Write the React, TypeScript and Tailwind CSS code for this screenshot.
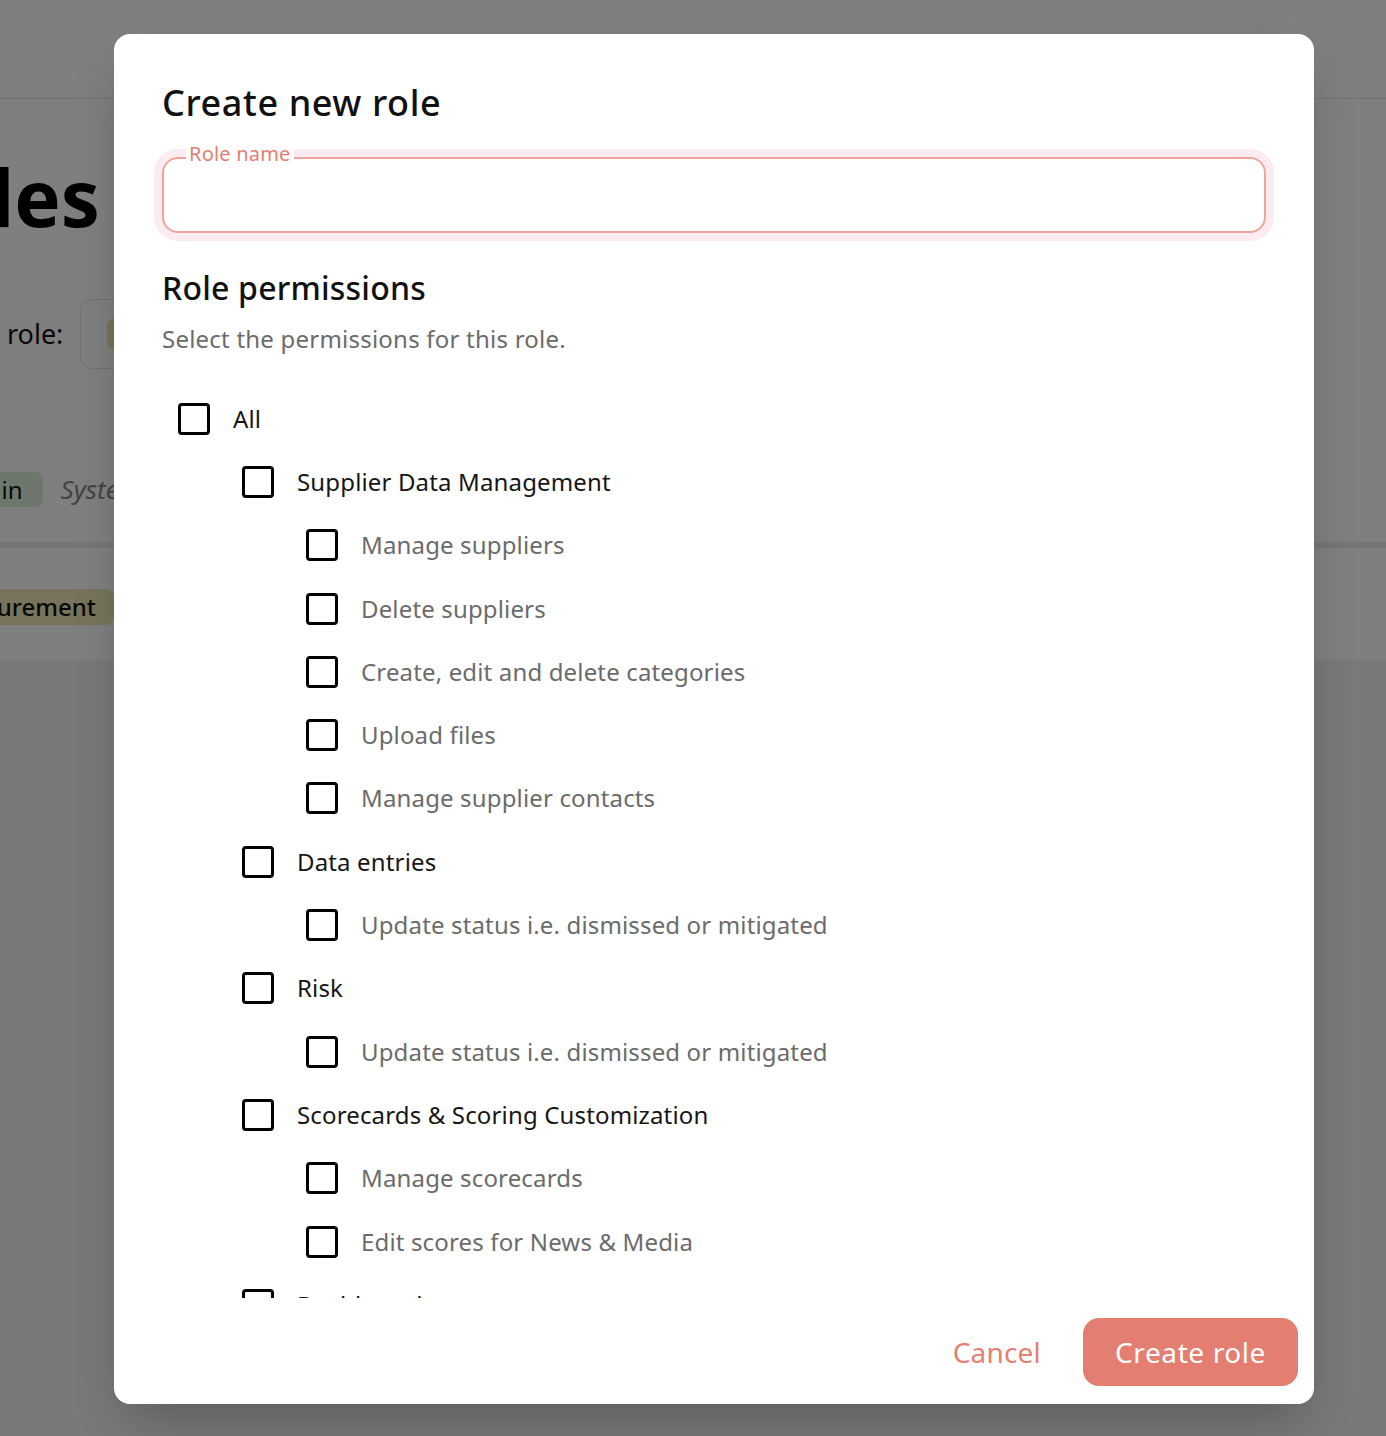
import React from "react";

type Perm = { label: string; level: 0 | 1 | 2 };

const permissions: Perm[] = [
  { label: "All", level: 0 },
  { label: "Supplier Data Management", level: 1 },
  { label: "Manage suppliers", level: 2 },
  { label: "Delete suppliers", level: 2 },
  { label: "Create, edit and delete categories", level: 2 },
  { label: "Upload files", level: 2 },
  { label: "Manage supplier contacts", level: 2 },
  { label: "Data entries", level: 1 },
  { label: "Update status i.e. dismissed or mitigated", level: 2 },
  { label: "Risk", level: 1 },
  { label: "Update status i.e. dismissed or mitigated", level: 2 },
  { label: "Scorecards & Scoring Customization", level: 1 },
  { label: "Manage scorecards", level: 2 },
  { label: "Edit scores for News & Media", level: 2 },
  { label: "Dashboards", level: 1 },
  { label: "View dashboards", level: 2 },
  { label: "Manage dashboards", level: 2 },
];

const indent = ["ml-[16px]", "ml-[80px]", "ml-[144px]"];

/**
 * Page behind the dialog, mostly cut off on the left
 */
const BackgroundPage = () => {
  return (
    <div className="h-[1436px] w-full overflow-hidden bg-[#f3f3f3]">
      <header className="h-[99px] border-b border-[#eedfd0] bg-white" />
      <div className="bg-white pb-[33px]">
        <h1 className="-ml-[109px] pt-[48px] text-[78px] font-bold leading-[100px] text-black">
          Roles
        </h1>
        <div className="mt-[52px] flex items-center">
          <span className="-ml-[75px] text-[27px] text-[#111]">Select role:</span>
          <div className="ml-[17px] flex h-[70px] w-[300px] items-center rounded-xl border border-[#e3e3e3] pl-[26px]">
            <span className="h-[32px] w-[120px] rounded-lg bg-[#efe8b4]" />
          </div>
        </div>
        <div className="mt-[101px] flex items-center">
          <span className="-ml-[63px] flex h-[35px] items-center rounded-lg bg-[#dcefd8] pl-[12px] pr-[20px] text-[24px] text-[#111]">
            Admin
          </span>
          <span className="ml-[18px] text-[26px] italic text-[#888]">System role</span>
        </div>
      </div>
      <div className="border-t-[6px] border-[#ececec] bg-white">
        <div className="flex h-[112px] items-start pt-[41px]">
          <span className="-ml-[66px] flex h-[36px] items-center rounded-lg bg-[#eee8b6] pl-[12px] pr-[18px] text-[24px] font-medium text-[#111]">
            Procurement
          </span>
        </div>
      </div>
    </div>
  );
};

const Checkbox = () => (
  <span className="block h-8 w-8 shrink-0 rounded-[4px] border-[3px] border-black bg-white" />
);

export default function App() {
  return (
    <div className="relative font-['Noto_Sans',sans-serif]">
      <BackgroundPage />

      <div className="absolute inset-0 bg-black/50 pl-[114px] pt-[34px]">
        <div className="flex h-[1370px] w-[1200px] flex-col overflow-hidden rounded-2xl bg-white shadow-2xl">
          <div className="h-[1264px] overflow-hidden px-12 pt-[45px]">
            <h2 className="text-[36px] font-medium leading-[48px] tracking-[0.6px] text-[#111]">
              Create new role
            </h2>

            <div className="relative mt-[30px] h-[76px] rounded-2xl border-2 border-[#f0a59c] shadow-[0_0_0_8px_#fcebf0]">
              <span className="absolute -top-[15px] left-[22px] bg-white px-[3px] text-[20px] leading-[20px] tracking-[0.2px] text-[#e47d6f]">
                Role name
              </span>
            </div>

            <h3 className="mt-[33px] text-[32px] font-medium leading-[44px] tracking-[0.2px] text-[#111]">
              Role permissions
            </h3>
            <p className="mt-[11px] text-[24px] leading-[36px] tracking-[0.22px] text-[#6b6b6b]">
              Select the permissions for this role.
            </p>

            <ul className="mt-[30px]">
              {permissions.map((p, i) => (
                <li key={i} className="flex h-[63.3px] items-center">
                  <span className={indent[p.level]}>
                    <Checkbox />
                  </span>
                  <span
                    className={
                      "ml-[23px] text-[24px] leading-[32px] tracking-[0.15px] " +
                      (p.level === 2 ? "text-[#6b6b6b]" : "text-[#161616]")
                    }
                  >
                    {p.label}
                  </span>
                </li>
              ))}
            </ul>
          </div>

          <div className="flex h-[106px] items-start justify-end gap-[30px] pr-4 pt-5">
            <button className="h-[68px] px-3 text-[28px] tracking-[0.2px] text-[#e57f70]">Cancel</button>
            <button className="h-[68px] rounded-2xl bg-[#e47e71] px-8 text-[28px] tracking-[0.6px] text-white">
              Create role
            </button>
          </div>
        </div>
      </div>
    </div>
  );
}
